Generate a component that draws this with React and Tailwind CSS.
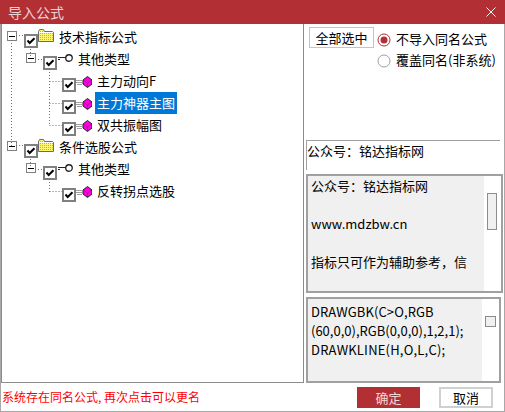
const font = { fontFamily: '"Noto Sans CJK SC", sans-serif' }

const Expander = ({ className }) => (
  <svg width="10" height="10" viewBox="0 0 10 10" className={className}>
    <rect x="0.5" y="0.5" width="9" height="9" fill="#fff" stroke="#808080" />
    <path d="M2 5.5h6" stroke="#000" />
  </svg>
)

const Check = () => (
  <svg width="14" height="14" viewBox="0 0 14 14" className="shrink-0 mt-2">
    <rect x="1" y="1" width="12" height="12" fill="#fff" stroke="#808080" strokeWidth="2" />
    <path d="M3.5 6.5l2.2 2.5 4.8-4.8" fill="none" stroke="#000" strokeWidth="2" />
  </svg>
)

const Folder = () => (
  <svg width="16" height="13" viewBox="0 0 16 13" className="shrink-0 mt-[3px]">
    <defs>
      <pattern id="dither" width="2" height="2" patternUnits="userSpaceOnUse">
        <rect width="2" height="2" fill="#fdf56a" />
        <rect width="1" height="1" fill="#b8b070" />
      </pattern>
    </defs>
    <path d="M0.5 12.5v-10l1-2h4l1 2h8l1 1v9z" fill="url(#dither)" stroke="#6b6b6b" />
    <path d="M1 3.5h14" stroke="#fff" />
  </svg>
)

const Key = () => (
  <svg width="16" height="8" viewBox="0 0 16 8" className="shrink-0 mt-[6px]">
    <circle cx="12" cy="4" r="3.25" fill="#fff" stroke="#222" strokeWidth="1.3" />
    <path d="M1 3.5h8M1 5.5h2" stroke="#222" />
  </svg>
)

const Gem = () => (
  <svg width="16" height="12" viewBox="0 0 16 12" className="shrink-0 mt-[6px]">
    <path d="M0 4.5h6M0 6.5h6M1 8.5h5" stroke="#a0a0a0" />
    <path d="M11.5 0.5L16 4v4l-4.5 3.5L7 8V4z" fill="#ff00e0" stroke="#222" />
    <path d="M8 4.5l3.5 2.5 3.5-2.5M11.5 7v4" fill="none" stroke="#900090" strokeWidth="0.6" />
  </svg>
)

const rows = [
  { level: 0, label: '技术指标公式', icon: Folder },
  { level: 1, label: '其他类型', icon: Key },
  { level: 2, label: '主力动向F', icon: Gem },
  { level: 2, label: '主力神器主图', icon: Gem, selected: true },
  { level: 2, label: '双共振幅图', icon: Gem },
  { level: 0, label: '条件选股公式', icon: Folder },
  { level: 1, label: '其他类型', icon: Key },
  { level: 2, label: '反转拐点选股', icon: Gem },
]

const TreeRow = ({ row }) => {
  const Icon = row.icon
  return (
    <div className="flex h-[22px] items-start">
      {row.level === 0 && <Expander className="shrink-0 mt-[5px] ml-[5px] mr-[7px]" />}
      {row.level === 1 && <Expander className="shrink-0 mt-[5px] ml-[24px] mr-[7px]" />}
      {row.level === 2 && <div className="shrink-0 w-[60px]" />}
      <Check />
      <Icon />
      <span
        className={
          'ml-[3px] px-[2px] h-[22px] leading-[21px] text-[13px] whitespace-nowrap ' +
          (row.selected ? 'bg-[#0078d7] text-white' : 'text-black')
        }
      >
        {row.label}
      </span>
    </div>
  )
}

// dotted guide lines of the tree, coordinates relative to the panel
const TreeLines = () => (
  <svg width="301" height="357" className="absolute left-0 top-0 pointer-events-none">
    <g fill="none" stroke="#707070" strokeDasharray="1 2">
      <path d="M9.5 16v107M14 11.5h8M14 121.5h8" />
      <path d="M28.5 22v10M33 35.5h8M28.5 132v10M33 145.5h8" />
      <path d="M47.5 45v56M47.5 57.5h13M47.5 79.5h13M47.5 101.5h13" />
      <path d="M47.5 155v13M47.5 167.5h13" />
    </g>
  </svg>
)

const Radio = ({ checked }) => (
  <svg width="14" height="14" viewBox="0 0 14 14" className="shrink-0">
    <circle cx="7" cy="7" r="6" fill="#fff" stroke={checked ? '#b23034' : '#a0a0a0'} />
    {checked && <circle cx="7" cy="7" r="3.5" fill="#b23034" />}
  </svg>
)

export default function App() {
  return (
    <div
      className="w-[505px] h-[412px] flex flex-col bg-white border-b border-[#a8a8a8] overflow-hidden"
      style={font}
    >
      <div className="h-6 shrink-0 bg-[#b23034] flex items-center justify-between pl-[8px] pr-[9px]">
        <span className="text-[14px] text-[#ecd4d4] leading-none">导入公式</span>
        <svg width="10" height="10" viewBox="0 0 10 10">
          <path d="M0.5 0.5l9 9M9.5 0.5l-9 9" stroke="#fff" />
        </svg>
      </div>

      <div className="flex h-[359px] shrink-0 border-x border-[#a8a8a8]">
        <div className="relative w-[303px] shrink-0 border border-t-0 border-[#8c8c8c] pt-[2px]">
          {rows.map((row, i) => (
            <TreeRow key={i} row={row} />
          ))}
          <TreeLines />
        </div>

        <div className="flex-1 flex flex-col pl-[2px]">
          <div className="flex items-start h-[116px] pt-[3px]">
            <button className="ml-[3px] w-[65px] h-[21px] border border-[#c4c4c4] text-[13px] leading-[19px] text-black">
              全部选中
            </button>
            <div className="ml-[3px] mt-[2px] flex flex-col">
              <div className="flex items-center h-[21px] gap-[4px] text-[13px] text-black">
                <Radio checked />
                <span className="ml-[1px] -mt-[2px]">不导入同名公式</span>
              </div>
              <div className="flex items-center h-[21px] gap-[4px] text-[13px] text-black">
                <Radio />
                <span className="ml-[1px] -mt-[2px] whitespace-nowrap">覆盖同名(非系统)</span>
              </div>
            </div>
          </div>

          <div className="w-[194px] h-[30px] mb-[4px] border-l border-t border-[#a0a0a0] text-[13px] leading-[20px] text-black">
            公众号：铭达指标网
          </div>

          <div className="w-[197px] h-[119px] border-2 border-[#a0a0a0] flex">
            <div className="w-[176px] bg-[#f0f0f0] pl-[3px] text-[13px] leading-[19px] text-black">
              <p>公众号：铭达指标网</p>
              <p className="mt-[19px]">www.mdzbw.cn</p>
              <p className="mt-[19px]">指标只可作为辅助参考，信</p>
            </div>
            <div className="flex-1 pl-[3px] pt-[17px]">
              <div className="w-[10px] h-[37px] bg-[#f0f0f0] border border-[#8c8c8c]" />
            </div>
          </div>

          <div className="w-[195px] mt-[4px] h-[86px] border-2 border-[#a0a0a0] flex">
            <div className="w-[174px] bg-[#f0f0f0] pl-[3px] pt-[3px] text-[13px] leading-[19px] text-black">
              <div className="tracking-[0.1px]">DRAWGBK(C&gt;O,RGB</div>
              <div>(60,0,0),RGB(0,0,0),1,2,1);</div>
              <div className="tracking-[0.2px]">DRAWKLINE(H,O,L,C);</div>
            </div>
            <div className="flex-1 pl-[3px] pt-[17px]">
              <div className="w-[11px] h-[11px] bg-[#f0f0f0] border border-[#8c8c8c]" />
            </div>
          </div>
        </div>
      </div>

      <div className="flex-1 flex items-center border-x border-[#a8a8a8] pl-[1px]">
        <span className="text-[12px] text-[#ff0000] w-[355px] whitespace-nowrap">
          系统存在同名公式, 再次点击可以更名
        </span>
        <button className="w-[63px] h-[21px] bg-[#b23034] text-[13px] leading-none text-[#f0d8d8]">确定</button>
        <button className="ml-[19px] w-[54px] h-[21px] border-2 border-[#d0d0d0] text-[13px] leading-none text-black">
          取消
        </button>
      </div>
    </div>
  )
}
